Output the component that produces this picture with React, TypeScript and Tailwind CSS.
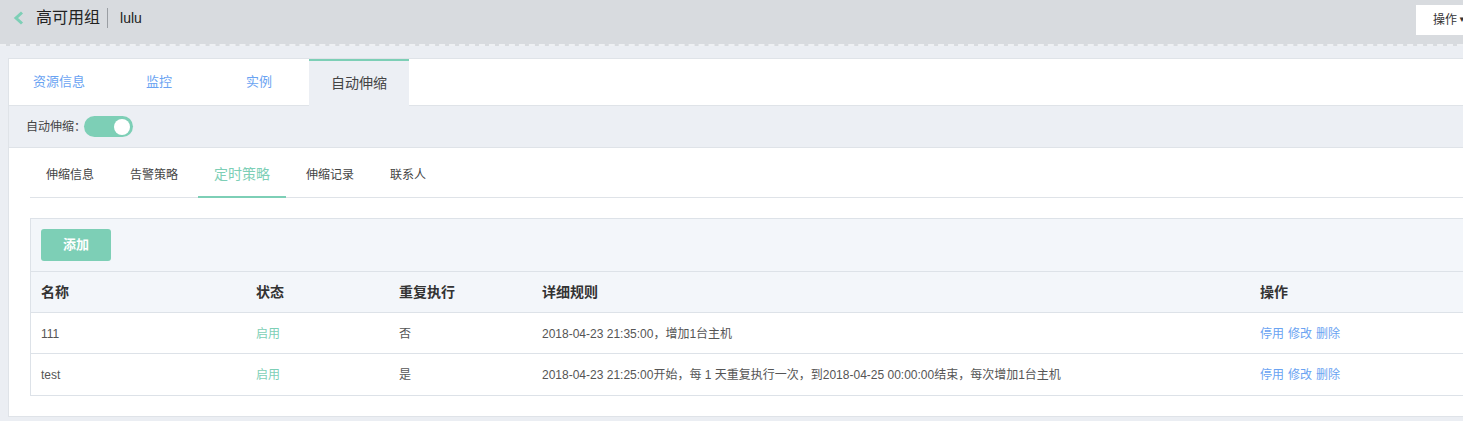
import React from "react";

const font = { fontFamily: '"Liberation Sans", "Noto Sans CJK SC", sans-serif' };

export default function App() {
  const rows = [
    { name: "111", status: "启用", repeat: "否", rule: "2018-04-23 21:35:00，增加1台主机" },
    {
      name: "test",
      status: "启用",
      repeat: "是",
      rule: "2018-04-23 21:25:00开始，每 1 天重复执行一次，到2018-04-25 00:00:00结束，每次增加1台主机",
    },
  ];
  return (
    <div style={font} className="w-[1463px] h-[421px] overflow-hidden bg-[#ebeef3] text-[#333]">
      {/* header */}
      <div className="h-[46px] bg-[#d8dbdf] border-b-2 border-dashed border-[#eef0f3] flex items-center relative">
        <svg className="ml-[13px] mt-[-8px]" width="12" height="14" viewBox="0 0 12 14">
          <polyline points="9,1.5 3,7 9,12.5" fill="none" stroke="#7dcfb6" strokeWidth="3" />
        </svg>
        <span className="ml-[11px] mt-[-8px] text-[16px] text-[#222]">高可用组</span>
        <span className="ml-[7px] mt-[-8px] w-px h-[20px] bg-[#9a9ea3]" />
        <span className="ml-[12px] mt-[-8px] text-[14px] text-[#222]">lulu</span>
        <div className="absolute left-[1416px] top-[5px] w-[60px] h-[30px] bg-white flex items-center pl-[17px] text-[12px] text-[#333]">
          操作
          <span className="ml-[1px] text-[8px]">▼</span>
        </div>
      </div>

      {/* card */}
      <div className="ml-[8px] mt-[12px] w-[1480px] bg-white border border-[#dfe3e8] pb-[20px]">
        {/* top tabs */}
        <div className="h-[47px] flex border-b border-[#dfe3e8]">
          {["资源信息", "监控", "实例"].map((t) => (
            <div key={t} className="w-[100px] flex items-center justify-center text-[13px] text-[#6aa3f2]">
              {t}
            </div>
          ))}
          <div className="w-[100px] h-[47px] bg-[#eceff4] border-t-2 border-[#7dcfb6] flex items-center justify-center text-[14px] text-[#444]">
            自动伸缩
          </div>
        </div>
        {/* toggle strip */}
        <div className="h-[42px] bg-[#eceff4] border-b border-[#dfe3e8] flex items-center pl-[17px]">
          <span className="text-[12px] text-[#444]">自动伸缩：</span>
          <div className="ml-[-2px] w-[49px] h-[21px] rounded-full bg-[#7dcfb6] flex items-center justify-end pr-[3px]">
            <div className="w-[16px] h-[16px] rounded-full bg-white" />
          </div>
        </div>
        {/* inner tabs */}
        <div className="ml-[21px]">
          <div className="h-[50px] flex border-b border-[#dfe3e8]">
            {["伸缩信息", "告警策略", "定时策略", "伸缩记录", "联系人"].map((t) =>
              t === "定时策略" ? (
                <div
                  key={t}
                  className="mr-[4px] px-[16px] flex items-center text-[14px] text-[#7dcfb6] border-b-2 border-[#7dcfb6] mb-[-1px] pt-[5px]"
                >
                  {t}
                </div>
              ) : (
                <div key={t} className="mr-[4px] px-[16px] flex items-center text-[12px] text-[#444] pt-[5px]">
                  {t}
                </div>
              )
            )}
          </div>
          {/* table */}
          <div className="mt-[20px] border border-[#dde2e8]">
            <div className="h-[53px] bg-[#f3f6fa] border-b border-[#dde2e8] pl-[10px] pt-[10px]">
              <div className="w-[70px] h-[32px] rounded-[3px] bg-[#7dcfb6] text-white text-[13px] font-bold flex items-center justify-center">
                添加
              </div>
            </div>
            <div className="h-[41px] bg-[#f3f6fa] border-b border-[#dde2e8] flex items-center pl-[10px] text-[14px] font-bold text-[#333]">
              <div className="w-[215px]">名称</div>
              <div className="w-[143px]">状态</div>
              <div className="w-[143px]">重复执行</div>
              <div className="w-[718px]">详细规则</div>
              <div>操作</div>
            </div>
            {rows.map((r) => (
              <div
                key={r.name}
                className="h-[41px] bg-white border-b border-[#dde2e8] last:border-b-0 flex items-center pl-[10px] pt-[1px] text-[12px] text-[#555]"
              >
                <div className="w-[215px]">{r.name}</div>
                <div className="w-[143px] text-[#7dcfb6]">{r.status}</div>
                <div className="w-[143px]">{r.repeat}</div>
                <div className="w-[718px]">{r.rule}</div>
                <div className="flex gap-[4px] text-[#6aa3f2]">
                  <span>停用</span>
                  <span>修改</span>
                  <span>删除</span>
                </div>
              </div>
            ))}
          </div>
        </div>
      </div>
    </div>
  );
}
